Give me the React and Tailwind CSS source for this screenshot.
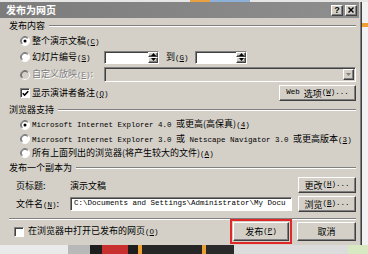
import React from 'react'

const cjk = "font-['Noto_Sans_CJK_SC',sans-serif] text-[9px] leading-none"
const mono = "font-['Liberation_Mono',monospace] text-[7.5px] leading-none"
const raised =
  'border border-t-white border-l-white border-r-[#404040] border-b-[#404040] shadow-[inset_-1px_-1px_0_#808080] bg-[#d4d0c8]'
const sunken =
  'border border-t-[#808080] border-l-[#808080] border-r-white border-b-white shadow-[inset_1px_1px_0_#404040]'

function Key({ k }) {
  return (
    <span className={mono}>
      (<span className="underline">{k}</span>)
    </span>
  )
}

function Radio({ checked, disabled }) {
  return (
    <svg width="10" height="10" viewBox="0 0 12 12" className="shrink-0">
      <circle cx="6" cy="6" r="5.5" fill={disabled ? '#d4d0c8' : '#fff'} />
      <path d="M2.1 9.9 A5.5 5.5 0 0 1 9.9 2.1" stroke="#808080" fill="none" />
      <path d="M2.8 9.2 A4.5 4.5 0 0 1 9.2 2.8" stroke="#404040" fill="none" />
      <path d="M9.9 2.1 A5.5 5.5 0 0 1 2.1 9.9" stroke="#fff" fill="none" />
      {checked && <circle cx="6" cy="6" r="1.8" fill="#000" />}
    </svg>
  )
}

function Check({ checked }) {
  return (
    <span className={`w-[10px] h-[10px] bg-white flex items-center justify-center shrink-0 ${sunken}`}>
      {checked && (
        <svg width="7" height="7" viewBox="0 0 7 7">
          <path d="M0.7 3.2 L2.6 5.1 L6.3 1.3" stroke="#000" strokeWidth="1.5" fill="none" />
        </svg>
      )}
    </span>
  )
}

function Arrow({ up, color = '#000' }) {
  return (
    <svg width="5" height="3" viewBox="0 0 5 3">
      <path d={up ? 'M0 3 L2.5 0 L5 3 Z' : 'M0 0 L5 0 L2.5 3 Z'} fill={color} />
    </svg>
  )
}

function Spin({ w }) {
  return (
    <div className={`h-[13px] bg-white flex justify-end ${w} ${sunken}`}>
      <div className="w-[10px] flex flex-col">
        <div className={`flex-1 flex items-center justify-center ${raised}`}>
          <Arrow up />
        </div>
        <div className={`flex-1 flex items-center justify-center ${raised}`}>
          <Arrow />
        </div>
      </div>
    </div>
  )
}

function Btn({ w, children }) {
  return (
    <div className={`h-[16px] flex items-center justify-center ${w} ${raised}`}>{children}</div>
  )
}

function Group({ label }) {
  return (
    <div className="h-[15px] flex items-center pl-[9px]">
      <span className={cjk}>{label}</span>
      <div className="flex-1 ml-[4px] h-[2px] border-t border-t-[#808080] border-b border-b-white" />
    </div>
  )
}

export default function App() {
  return (
    <div className="w-[368px] h-[254px] bg-[#ececec] flex flex-col overflow-hidden">
      <div className="h-[2px] flex">
        <div className="w-[190px] bg-[#e6e6e6]" />
        <div className="w-[20px] bg-[#e8a040]" />
        <div className="w-[40px] bg-[#8cb0d8]" />
        <div className="flex-1 bg-[#e6e6e6]" />
      </div>
      <div className="flex h-[243px]">
        <div className="w-[362px] bg-[#d4d0c8] flex flex-col border-r border-r-[#404040] shadow-[inset_-1px_0_0_#808080] pr-[1px]">
          <div className="h-[16px] mr-[1px] bg-gradient-to-r from-[#7c7c7c] to-[#8e8e8e] flex items-center pl-[6px] pr-[2px]">
            <span className="font-['Noto_Sans_CJK_SC',sans-serif] text-[10px] font-bold text-white leading-none">
              发布为网页
            </span>
            <div className="ml-auto flex items-center">
              <div className={`w-[12px] h-[11px] flex items-center justify-center ${raised}`}>
                <span className="font-['Liberation_Sans',sans-serif] text-[9px] font-bold leading-none">?</span>
              </div>
              <div className={`w-[12px] h-[11px] ml-[2px] flex items-center justify-center ${raised}`}>
                <svg width="6" height="6" viewBox="0 0 6 6">
                  <path d="M0.5 0.5 L5.5 5.5 M5.5 0.5 L0.5 5.5" stroke="#000" strokeWidth="1.4" />
                </svg>
              </div>
            </div>
          </div>

          <div className="flex flex-col pr-[4px] text-black">
            <Group label="发布内容" />
            <div className="h-[16px] flex items-center pl-[20px]">
              <Radio checked />
              <span className={`${cjk} ml-[2px]`}>整个演示文稿<Key k="C" /></span>
            </div>
            <div className="h-[16px] flex items-center pl-[20px]">
              <Radio />
              <span className={`${cjk} ml-[2px] w-[72px]`}>幻灯片编号<Key k="S" /></span>
              <Spin w="w-[55px]" />
              <span className={`${cjk} ml-[7px] w-[29px]`}>到<Key k="G" /></span>
              <Spin w="w-[52px]" />
            </div>
            <div className="h-[19px] flex items-center pl-[20px]">
              <Radio disabled />
              <span className={`${cjk} ml-[2px] w-[72px] text-[#808080] [text-shadow:1px_1px_0_#fff]`}>
                自定义放映<Key k="E" />:
              </span>
              <div className={`flex-1 h-[15px] bg-[#d4d0c8] flex justify-end items-center pr-[1px] ${sunken}`}>
                <div className={`w-[11px] h-[11px] flex items-center justify-center ${raised}`}>
                  <Arrow color="#808080" />
                </div>
              </div>
            </div>
            <div className="h-[18px] flex items-center pl-[20px]">
              <Check checked />
              <span className={`${cjk} ml-[2px]`}>显示演讲者备注<Key k="Q" /></span>
              <div className="ml-auto">
                <Btn w="w-[77px]">
                  <span className={mono}>Web</span>
                  <span className={`${cjk} ml-[4px]`}>选项</span>
                  <Key k="W" />
                  <span className={mono}>...</span>
                </Btn>
              </div>
            </div>
            <Group label="浏览器支持" />
            <div className="h-[15px] flex items-center pl-[20px]">
              <Radio checked />
              <span className={`${cjk} ml-[2px]`}>
                <span className={mono}>Microsoft Internet Explorer 4.0 </span>或更高(高保真)<Key k="4" />
              </span>
            </div>
            <div className="h-[14px] flex items-center pl-[20px]">
              <Radio />
              <span className={`${cjk} ml-[2px]`}>
                <span className={mono}>Microsoft Internet Explorer 3.0 </span>或
                <span className={mono}> Netscape Navigator 3.0 </span>或更高版本<Key k="3" />
              </span>
            </div>
            <div className="h-[14px] flex items-center pl-[20px]">
              <Radio />
              <span className={`${cjk} ml-[2px]`}>所有上面列出的浏览器(将产生较大的文件)<Key k="A" /></span>
            </div>
            <Group label="发布一个副本为" />
            <div className="h-[20px] flex items-center pl-[16px]">
              <span className={`${cjk} w-[54px]`}>页标题:</span>
              <span className={cjk}>演示文稿</span>
              <div className="ml-auto">
                <Btn w="w-[58px]">
                  <span className={cjk}>更改</span>
                  <Key k="H" />
                  <span className={mono}>...</span>
                </Btn>
              </div>
            </div>
            <div className="h-[18px] flex items-center pl-[16px]">
              <span className={`${cjk} w-[54px]`}>文件名<Key k="N" />:</span>
              <div className={`w-[222px] h-[14px] bg-white flex items-center pl-[3px] overflow-hidden ${sunken}`}>
                <span className={`${mono} whitespace-nowrap`}>C:\Documents and Settings\Administrator\My Docu</span>
              </div>
              <div className="ml-auto">
                <Btn w="w-[58px]">
                  <span className={cjk}>浏览</span>
                  <Key k="B" />
                  <span className={mono}>...</span>
                </Btn>
              </div>
            </div>
            <div className="h-[7px] flex items-end pl-[9px]">
              <div className="flex-1 h-[2px] border-t border-t-[#808080] border-b border-b-white" />
            </div>
            <div className="h-[23px] flex items-center pl-[14px]">
              <Check />
              <span className={`${cjk} ml-[4px]`}>在浏览器中打开已发布的网页<Key k="O" /></span>
              <div className="ml-auto flex items-center">
                <div className="relative">
                  <div className={`w-[56px] h-[19px] flex items-center justify-center ${raised}`}>
                    <span className={cjk}>发布</span>
                    <Key k="P" />
                  </div>
                  <div className="absolute -inset-[3px] border-2 border-[#e02828]" />
                </div>
                <div className={`w-[59px] h-[19px] ml-[8px] flex items-center justify-center ${raised}`}>
                  <span className={cjk}>取消</span>
                </div>
              </div>
            </div>
          </div>
        </div>
        <div className="flex-1 flex flex-col bg-[#f2f2f2]">
          <div className="h-[21px]" />
          <div className="h-[4px] bg-[#f0a030]" />
        </div>
      </div>
      <div className="h-[9px] flex">
        <div className="w-[68px] bg-[#eaeaea]" />
        <div className="w-[22px] bg-[#b8b8b8]" />
        <div className="w-[12px] bg-[#1e1e1e]" />
        <div className="w-[26px] bg-[#c83030]" />
        <div className="w-[10px] bg-[#1e1e1e]" />
        <div className="w-[4px] bg-[#f0a030]" />
        <div className="w-[60px] bg-[#262626]" />
        <div className="w-[4px] bg-[#e8a030]" />
        <div className="w-[28px] bg-[#2a2a2a]" />
        <div className="flex-1 bg-[#dcdcdc]" />
        <div className="w-[20px] bg-[#d8e8c0]" />
      </div>
    </div>
  )
}
